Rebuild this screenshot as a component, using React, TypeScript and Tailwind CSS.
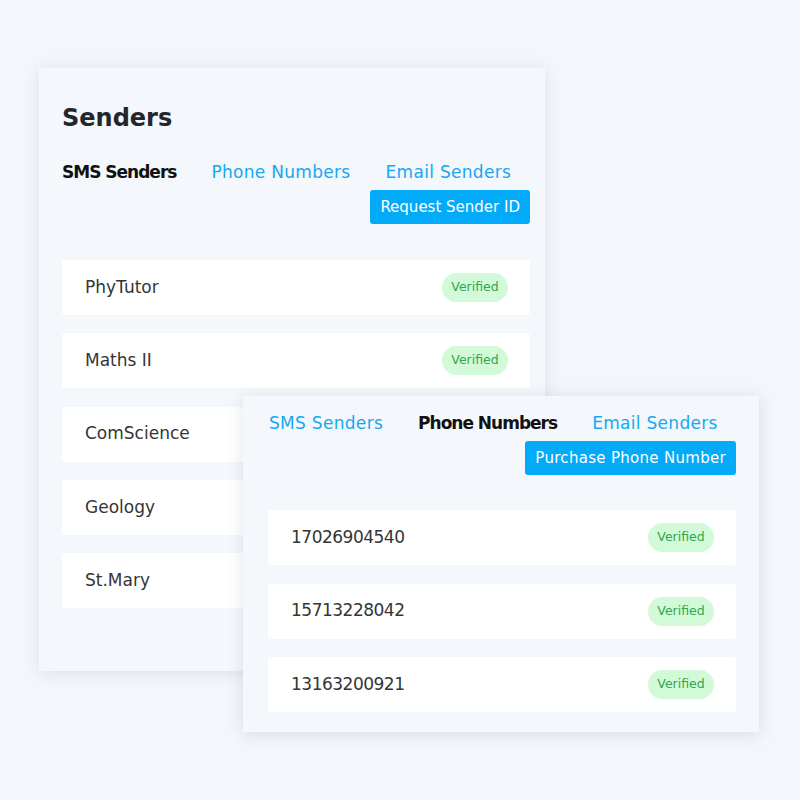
import React from "react";

const font = { fontFamily: '"DejaVu Sans", sans-serif' };

function Row({ label, mono }: { label: string; mono?: boolean }) {
  return (
    <div className="flex h-[55px] items-center justify-between rounded-[3px] bg-white pl-[23px] pr-[22px]">
      <span className={mono ? "text-[17px] tracking-[-0.5px] text-[#353535]" : "text-[17px] text-[#353535]"}>
        {label}
      </span>
      <span className="flex h-[29px] w-[66px] items-center justify-center rounded-full bg-[#d2fad8] text-[12.5px] text-[#30a650]">
        Verified
      </span>
    </div>
  );
}

function Tabs({ active }: { active: number }) {
  const tabs = ["SMS Senders", "Phone Numbers", "Email Senders"];
  return (
    <div className="flex h-[24px] items-center gap-[35px] text-[17px] leading-[24px]">
      {tabs.map((t, i) => (
        <span
          key={t}
          className={
            i === active
              ? "font-semibold tracking-[-1px] text-[#111]"
              : "tracking-[0.3px] text-[#16a8f2]"
          }
        >
          {t}
        </span>
      ))}
    </div>
  );
}

export default function App() {
  return (
    <div className="relative h-[800px] w-[800px] overflow-hidden bg-[#f3f6fa]" style={font}>
      <div className="absolute left-[39px] top-[68px] flex h-[603px] w-[506px] flex-col bg-[#f4f7fb] pl-[23px] pr-[15px] pt-[34px] shadow-[0_2px_16px_rgba(30,40,70,0.10)]">
        <h1 className="h-[32px] text-[24px] font-bold leading-[32px] text-[#23262b]">Senders</h1>
        <div className="mt-[26px]">
          <Tabs active={0} />
        </div>
        <div className="mt-[6px] flex justify-end">
          <button className="h-[34px] rounded-[3px] bg-[#03aaf8] px-[10px] text-[15px] font-medium text-white">
            Request Sender ID
          </button>
        </div>
        <div className="mt-[36px] flex flex-col gap-[18.25px]">
          {["PhyTutor", "Maths II", "ComScience", "Geology", "St.Mary"].map((s) => (
            <Row key={s} label={s} />
          ))}
        </div>
      </div>

      <div className="absolute left-[243px] top-[396px] flex h-[336px] w-[516px] flex-col bg-[#f4f7fb] pl-[25px] pr-[23px] pt-[15px] shadow-[0_2px_16px_rgba(30,40,70,0.12)]">
        <div className="pl-[1px]">
          <Tabs active={1} />
        </div>
        <div className="mt-[6px] flex justify-end">
          <button className="h-[34px] rounded-[3px] bg-[#03aaf8] px-[10px] text-[15px] font-medium tracking-[0.3px] text-white">
            Purchase Phone Number
          </button>
        </div>
        <div className="mt-[35px] flex flex-col gap-[18.5px]">
          {["17026904540", "15713228042", "13163200921"].map((s) => (
            <Row key={s} label={s} mono />
          ))}
        </div>
      </div>
    </div>
  );
}
